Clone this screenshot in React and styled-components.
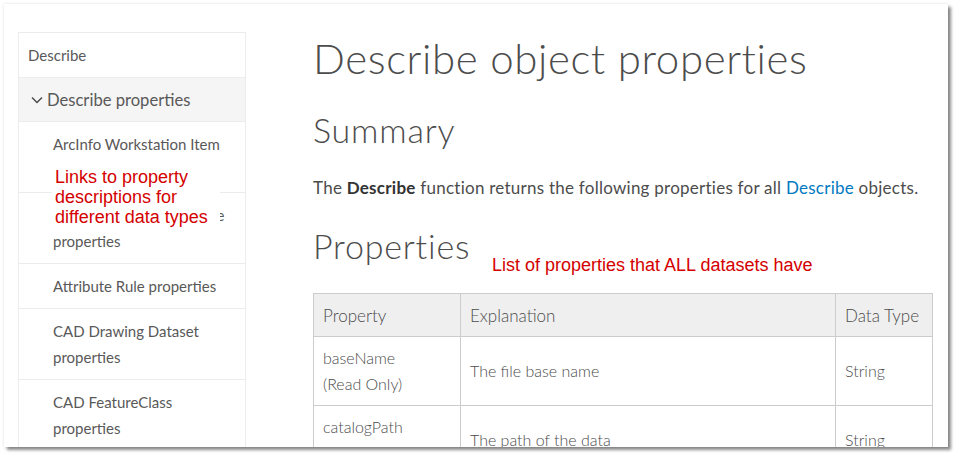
import React from "react";
import styled, { createGlobalStyle } from "styled-components";

const Global = createGlobalStyle`
  html, body { margin: 0; padding: 0; background: #ffffff; }
  body { font-family: Lato, "Open Sans", sans-serif; }
`;

const Page = styled.div`
  width: 957px;
  height: 456px;
  padding: 4px;
  box-sizing: border-box;
`;

const Panel = styled.div`
  width: 944px;
  height: 443px;
  background: #fff;
  overflow: hidden;
  box-shadow: 0 0 3px rgba(0,0,0,0.12), 3px 3px 3px rgba(0,0,0,0.45);
  display: flex;
  align-items: flex-start;
  padding: 28px 16px 0 14px;
  box-sizing: border-box;
  gap: 67px;
  position: relative;
`;

const Sidebar = styled.nav`
  width: 228px;
  flex: none;
  border: 1px solid #ececec;
  box-sizing: border-box;
  font-size: 15px;
  color: #595959;
`;

const NavItem = styled.div`
  border-top: ${(p) => (p.$first ? "none" : "1px solid #ececec")};
  background: ${(p) => (p.$active ? "#f5f5f5" : "#fff")};
  padding: 0 9px;
  height: ${(p) => (p.$first ? "44px" : "43px")};
  font-size: ${(p) => (p.$active ? "16.6px" : "15px")};
  display: flex;
  align-items: center;
  gap: 3px;
`;

const SubItem = styled.div`
  border-top: 1px solid #ececec;
  padding: 9px 12px 9px 34px;
  line-height: 26px;
`;

const Chevron = () => (
  <svg width="14" height="14" viewBox="0 0 14 14" style={{ marginLeft: 2, display: "block" }}>
    <path d="M2 4.5 L7 9.5 L12 4.5" fill="none" stroke="#4c4c4c" strokeWidth="1.5" />
  </svg>
);

const Note = styled.div`
  position: absolute;
  font-family: "Liberation Sans", Arial, sans-serif;
  font-size: 18px;
  line-height: 20px;
  color: #d40000;
  white-space: nowrap;
  background: ${(p) => (p.$bg ? "#fff" : "transparent")};
`;

const Main = styled.main`
  flex: 1;
  color: #4c4c4c;
`;

const Title = styled.h1`
  margin: 0;
  font-weight: 300;
  font-size: 42px;
  line-height: 52px;
  letter-spacing: 0.6px;
`;

const SubTitle = styled.h2`
  margin: ${(p) => p.$mt || "0"} 0 0;
  font-weight: 300;
  font-size: 34px;
  line-height: 44px;
  letter-spacing: 0.8px;
`;

const Para = styled.p`
  margin: 24px 0 0;
  font-size: 17px;
  line-height: 24px;
  letter-spacing: 0.25px;
  white-space: nowrap;
  b { font-weight: 700; color: #333; }
`;

const Link = styled.span`
  color: #0079c1;
`;

const Table = styled.table`
  margin-top: 25px;
  width: 620px;
  border-collapse: collapse;
  font-size: 16px;
  font-weight: 300;
`;

const Th = styled.th`
  background: #efefef;
  border: 1px solid #cccccc;
  text-align: left;
  font-weight: 300;
  font-size: 17px;
  padding: 0 9px;
  height: 43px;
  box-sizing: border-box;
  width: ${(p) => p.$w || "auto"};
`;

const Td = styled.td`
  border: 1px solid #cccccc;
  padding: 8px 9px;
  line-height: 26px;
  vertical-align: middle;
  height: 69px;
  box-sizing: border-box;
`;

export default function App() {
  return (
    <>
      <Global />
      <Page>
        <Panel>
          <Sidebar>
            <NavItem $first>Describe</NavItem>
            <NavItem $active>
              <Chevron />
              Describe properties
            </NavItem>
            <SubItem>ArcInfo Workstation Item properties</SubItem>
            <SubItem>ArcInfo Workstation Table properties</SubItem>
            <SubItem>Attribute Rule properties</SubItem>
            <SubItem>CAD Drawing Dataset properties</SubItem>
            <SubItem>CAD FeatureClass properties</SubItem>
            <SubItem>Cadastral Fabric properties</SubItem>
          </Sidebar>
          <Main>
            <Title>Describe object properties</Title>
            <SubTitle $mt="24px">Summary</SubTitle>
            <Para>
              The <b>Describe</b> function returns the following properties for all{" "}
              <Link>Describe</Link> objects.
            </Para>
            <SubTitle $mt="24px">Properties</SubTitle>
            <Table>
              <thead>
                <tr>
                  <Th $w="147px">Property</Th>
                  <Th>Explanation</Th>
                  <Th $w="97px">Data Type</Th>
                </tr>
              </thead>
              <tbody>
                <tr>
                  <Td>baseName<br />(Read Only)</Td>
                  <Td>The file base name</Td>
                  <Td>String</Td>
                </tr>
                <tr>
                  <Td>catalogPath<br />(Read Only)</Td>
                  <Td>The path of the data</Td>
                  <Td>String</Td>
                </tr>
              </tbody>
            </Table>
          </Main>
          <Note $bg style={{ left: 48, top: 154, width: 168, height: 73, padding: "9px 0 0 3px", boxSizing: "border-box" }}>
            Links to property<br />descriptions for<br />different data types
          </Note>
          <Note style={{ left: 488, top: 251 }}>List of properties that ALL datasets have</Note>
        </Panel>
      </Page>
    </>
  );
}
